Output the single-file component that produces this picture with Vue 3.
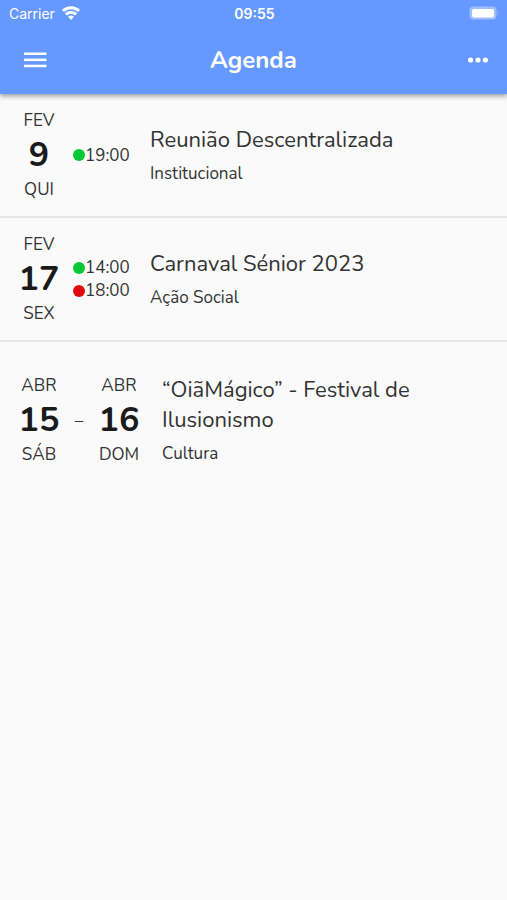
<template>
  <div class="app">
    <header class="header">
      <div class="status-bar">
        <div class="carrier">
          <span>Carrier</span>
          <svg width="18" height="14" viewBox="0 0 18 14" fill="none" stroke="#fff" stroke-width="2.9">
            <path d="M1 5a11.4 11.4 0 0 1 16 0" />
            <path d="M3.9 8.5a7.3 7.3 0 0 1 10.2 0" />
            <path d="M9 13.9l-2.9-3.1a4.2 4.2 0 0 1 5.8 0z" fill="#fff" stroke="none" />
          </svg>
        </div>
        <span class="clock">09:55</span>
        <div class="battery">
          <svg width="31" height="14" viewBox="0 0 31 14">
            <rect x="0.5" y="0.5" width="27" height="13" rx="4" fill="#9dbeff" />
            <rect x="3" y="3" width="22" height="8.5" rx="2" fill="#fff" />
            <path d="M28.6 4.8q2 2.2 0 4.4z" fill="#9dbeff" />
          </svg>
        </div>
      </div>
      <div class="toolbar">
        <button class="icon-button" type="button" aria-label="Menu">
          <svg width="24" height="16" viewBox="0 0 24 16" fill="#fff">
            <rect x="1" y="0.5" width="22.5" height="2.5" />
            <rect x="1" y="6.6" width="22.5" height="2.5" />
            <rect x="1" y="12.7" width="22.5" height="2.5" />
          </svg>
        </button>
        <h1>Agenda</h1>
        <button class="icon-button more" type="button" aria-label="Mais opções">
          <svg width="20" height="6" viewBox="0 0 20 6" fill="#fff">
            <circle cx="2.6" cy="3" r="2.6" />
            <circle cx="10" cy="3" r="2.6" />
            <circle cx="17.4" cy="3" r="2.6" />
          </svg>
        </button>
      </div>
    </header>

    <main>
      <article
        v-for="event in events"
        :key="event.title"
        class="event"
        :class="{ range: event.end }"
      >
        <div class="date">
          <span>{{ event.start.month }}</span>
          <strong>{{ event.start.day }}</strong>
          <span>{{ event.start.weekday }}</span>
        </div>

        <template v-if="event.end">
          <span class="dash">–</span>
          <div class="date">
            <span>{{ event.end.month }}</span>
            <strong>{{ event.end.day }}</strong>
            <span>{{ event.end.weekday }}</span>
          </div>
        </template>

        <div v-else class="times">
          <div v-for="time in event.times" :key="time.hour" class="time">
            <i class="dot" :class="time.type"></i>
            <span>{{ time.hour }}</span>
          </div>
        </div>

        <div class="info">
          <h2>{{ event.title }}</h2>
          <p>{{ event.category }}</p>
        </div>
      </article>
    </main>
  </div>
</template>

<script setup>
import { ref } from "vue";

const events = ref([
  {
    title: "Reunião Descentralizada",
    category: "Institucional",
    start: { month: "FEV", day: 9, weekday: "QUI" },
    times: [{ hour: "19:00", type: "opening" }],
  },
  {
    title: "Carnaval Sénior 2023",
    category: "Ação Social",
    start: { month: "FEV", day: 17, weekday: "SEX" },
    times: [
      { hour: "14:00", type: "opening" },
      { hour: "18:00", type: "closing" },
    ],
  },
  {
    title: "“OiãMágico” - Festival de Ilusionismo",
    category: "Cultura",
    start: { month: "ABR", day: 15, weekday: "SÁB" },
    end: { month: "ABR", day: 16, weekday: "DOM" },
  },
]);
</script>

<style>
body {
  background-color: #fafafa;
}
</style>

<style scoped>
.app {
  min-height: 100vh;
  background-color: #fafafa;
  color: #333;
  font-family: Nunito, Lato, "Open Sans", sans-serif;
}

.header {
  background-color: #6699ff;
  color: #fff;
  box-shadow: 0 2px 5px rgba(0, 0, 0, 0.4);
}

.status-bar {
  display: grid;
  grid-template-columns: 1fr auto 1fr;
  align-items: center;
  height: 26px;
  padding: 0 7px 0 9px;
  font-family: Inter, sans-serif;
  font-size: 14px;
}

.carrier {
  display: flex;
  align-items: center;
  gap: 7px;
}

.clock {
  font-weight: 600;
}

.battery {
  display: flex;
  justify-content: flex-end;
}

.toolbar {
  display: grid;
  grid-template-columns: 48px 1fr 48px;
  align-items: center;
  height: 68px;
  padding: 0 11px;
}

h1 {
  margin: 0;
  font-size: 24px;
  font-weight: bold;
  text-align: center;
}

.icon-button {
  display: flex;
  align-items: center;
  justify-content: center;
  height: 48px;
  padding: 0;
  border: none;
  background: none;
  cursor: pointer;
}

.more {
  padding-left: 12px;
}

.event {
  display: flex;
  align-items: center;
  padding: 15px 18px;
  border-bottom: 2px solid #e6e6e6;
}

.event:last-child {
  border-bottom: none;
}

.range {
  padding: 32px 18px;
}

.date {
  display: flex;
  flex: none;
  flex-direction: column;
  align-items: center;
  width: 42px;
  font-size: 17px;
  line-height: 23px;
}

.date strong {
  color: #1a1a1a;
  font-size: 34px;
  line-height: 46px;
}

.dash {
  flex: none;
  width: 38px;
  font-size: 17px;
  text-align: center;
}

.times {
  flex: none;
  width: 58px;
  margin-left: 13px;
}

.time {
  display: flex;
  align-items: center;
  font-size: 17px;
  line-height: 23px;
}

.dot {
  width: 12px;
  height: 12px;
  border-radius: 50%;
}

.opening {
  background-color: #04c935;
}

.closing {
  background-color: #df0a0e;
}

.info {
  flex: 1;
  min-width: 0;
  margin-left: 19px;
}

.range .info {
  margin-left: 22px;
}

h2 {
  max-width: 280px;
  margin: 0;
  font-size: 22px;
  font-weight: normal;
  line-height: 30px;
}

p {
  margin: 7px 0 0;
  font-size: 17px;
  line-height: 23px;
}
</style>
